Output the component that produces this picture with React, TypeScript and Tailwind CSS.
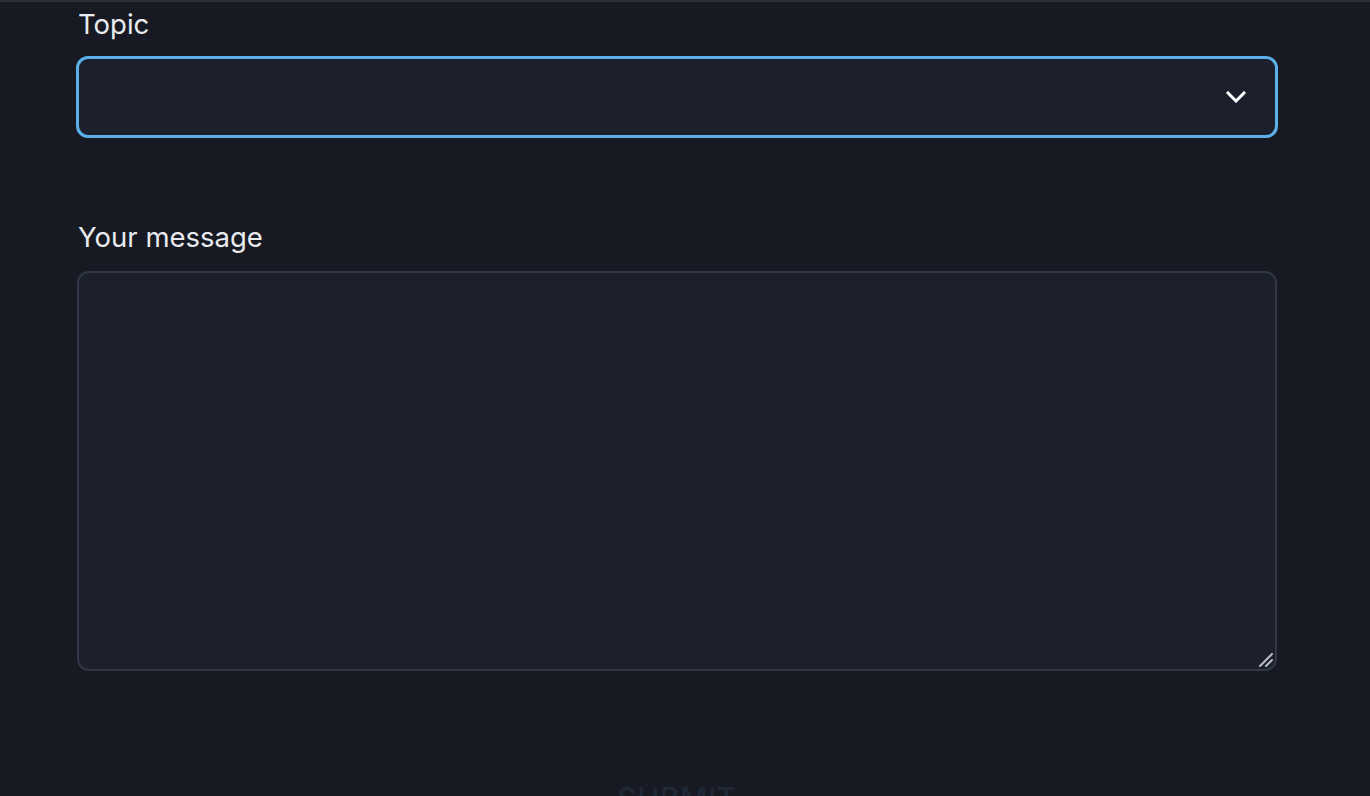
import React from 'react';

function Chevron() {
  return (
    <svg width="20" height="12" viewBox="0 0 20 12" fill="none" className="text-white">
      <path d="M2 2l8 8 8-8" stroke="currentColor" strokeWidth="3" strokeLinecap="square" />
    </svg>
  );
}

function ResizeGrip() {
  return (
    <svg width="16" height="16" viewBox="0 0 16 16" fill="none" className="text-[#b9bdc6]">
      <path d="M2 14L14 2M8 14l6-6" stroke="currentColor" strokeWidth="2" strokeLinecap="round" />
    </svg>
  );
}

export default function App(): React.JSX.Element {
  return (
    <div
      className="w-[1370px] h-[796px] overflow-hidden bg-[#171a22] border-t-2 border-[#2c2f38] text-[#e9ebef]"
      style={{ fontFamily: 'Inter, "Noto Sans", sans-serif' }}
    >
      <form className="flex flex-col pl-[76px] pt-[6px]">
        <label className="ml-[2px] text-[27.5px] leading-[32px]">Topic</label>

        {/* topic select, focused */}
        <div className="mt-[16px] w-[1202px] h-[82px] rounded-[12px] border-[3px] border-[#5cb0ea] bg-[#1b202c] flex items-center justify-end pr-[29px]">
          <Chevron />
        </div>

        <label className="ml-[2px] mt-[83px] text-[27.5px] leading-[32px]">Your message</label>

        <div className="relative ml-[1px] mt-[18px] w-[1200px] h-[400px]">
          <textarea className="w-full h-full rounded-[12px] border-2 border-[#313746] bg-[#1b202c] outline-none resize-none" />
          <div className="absolute right-[3px] bottom-[3px] pointer-events-none">
            <ResizeGrip />
          </div>
        </div>

        <div className="mt-[109px] w-[1202px] flex justify-center">
          <span className="text-[30px] leading-[36px] font-medium tracking-[0.5px] text-[#1f2836]">SUBMIT</span>
        </div>
      </form>
    </div>
  );
}
